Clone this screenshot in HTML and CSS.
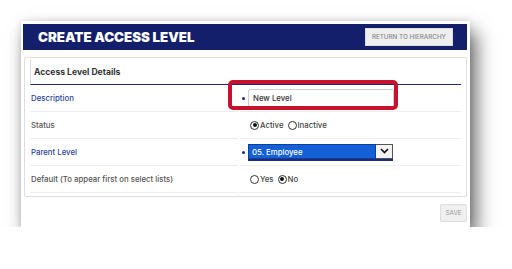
FILE: index.html
```html
<!DOCTYPE html>
<html lang="en">
<head>
    <meta charset="UTF-8">
    <meta name="viewport" content="width=device-width, initial-scale=1.0">
    <title>Create Access Level</title>
    <link rel="stylesheet" href="styles.css">
</head>
<body>
    <div class="window">
        <div class="page-header">
            <h1>CREATE ACCESS LEVEL</h1>
            <button class="btn-return">RETURN TO HIERARCHY</button>
        </div>

        <div class="panel">
            <div class="panel-title">Access Level Details</div>

            <div class="row">
                <div class="label label-req">Description</div>
                <div class="control">
                    <span class="req"></span>
                    <input type="text" class="text-input" value="New Level">
                    <div class="highlight"></div>
                </div>
            </div>

            <div class="row">
                <div class="label">Status</div>
                <div class="control radios">
                    <label><span class="radio checked"></span>Active</label>
                    <label><span class="radio"></span>Inactive</label>
                </div>
            </div>

            <div class="row">
                <div class="label label-req">Parent Level</div>
                <div class="control">
                    <span class="req"></span>
                    <div class="select">
                        <span class="select-value">05. Employee</span>
                        <span class="select-arrow">
                            <svg width="9" height="6" viewBox="0 0 9 6">
                                <path d="M1 1 L4.5 4.5 L8 1" fill="none" stroke="#111" stroke-width="1.6"/>
                            </svg>
                        </span>
                    </div>
                </div>
            </div>

            <div class="row">
                <div class="label">Default (To appear first on select lists)</div>
                <div class="control radios">
                    <label><span class="radio"></span>Yes</label>
                    <label><span class="radio checked"></span>No</label>
                </div>
            </div>
        </div>

        <div class="footer">
            <button class="btn-save">SAVE</button>
        </div>
    </div>
</body>
</html>
```

FILE: styles.css
```css
body {
    margin: 0;
    padding: 21px 0 0 21px;
    background-color: #ffffff;
    font-family: Inter, "Liberation Sans", Arial, sans-serif;
}

.window {
    width: 444px;
    height: 203px;
    padding: 3px 3px 0 2px;
    background-color: #ffffff;
    box-shadow: 6px 11px 18px rgba(0, 0, 0, 0.6), 0 0 6px rgba(0, 0, 0, 0.12);
    display: flex;
    flex-direction: column;
}

.page-header {
    height: 26px;
    background-color: #141f6c;
    display: flex;
    align-items: center;
    justify-content: space-between;
    padding: 0 14px 0 15px;
}

.page-header h1 {
    margin: 0;
    color: #ffffff;
    font-size: 13.3px;
    font-weight: 900;
    letter-spacing: 0;
}

.btn-return {
    height: 18px;
    padding: 0 6px;
    background-color: #efefef;
    border: 1px solid #dcdcdc;
    color: #8a8a8a;
    font-family: inherit;
    font-size: 6.3px;
    font-weight: 500;
}

.panel {
    margin-top: 7px;
    margin-left: 1px;
    border: 1px solid #dedede;
    border-radius: 2px;
    padding: 2px 5px 3px 5px;
}

.panel-title {
    height: 24px;
    line-height: 24px;
    padding-left: 3px;
    border-left: 1px solid #d5d9e6;
    border-bottom: 1.5px solid #1c2a78;
    font-size: 8.6px;
    font-weight: 700;
    color: #333333;
}

.row {
    display: flex;
    align-items: stretch;
    height: 27px;
    gap: 2px;
}

.label {
    width: 207px;
    display: flex;
    align-items: center;
    padding-left: 1px;
    border-bottom: 1px solid #eeeeee;
    font-size: 7.8px;
    font-weight: 500;
    color: #555555;
}

.label-req {
    color: #2c3f98;
}

.control {
    position: relative;
    display: flex;
    align-items: center;
    flex: 1;
    border-bottom: 1px solid #eeeeee;
}

.req {
    width: 8px;
    display: flex;
    align-items: center;
    padding-left: 2px;
    box-sizing: border-box;
}

.req::before {
    content: "";
    width: 3px;
    height: 3px;
    border-radius: 50%;
    background-color: #1c2a78;
}

.text-input {
    width: 146px;
    height: 18px;
    margin: 0;
    padding: 0 4px;
    box-sizing: border-box;
    border: 1px solid #cfcfcf;
    border-radius: 2px;
    font-family: inherit;
    font-size: 7.8px;
    font-weight: 500;
    color: #333333;
    outline: none;
}

.highlight {
    position: absolute;
    left: -12px;
    top: -5px;
    width: 162px;
    height: 22px;
    border: 4px solid #c4122f;
    border-radius: 5px;
}

.radios {
    padding-left: 10px;
    gap: 4px;
}

.radios label {
    display: flex;
    align-items: center;
    font-size: 7.8px;
    font-weight: 500;
    color: #444444;
}

.radio {
    width: 7px;
    height: 7px;
    border: 1px solid #333333;
    border-radius: 50%;
    margin-right: 1px;
    position: relative;
}

.radio.checked::after {
    content: "";
    position: absolute;
    left: 1.5px;
    top: 1.5px;
    width: 4px;
    height: 4px;
    border-radius: 50%;
    background-color: #111111;
}

.select {
    width: 145px;
    height: 15px;
    display: flex;
    border-bottom: 2px solid #1c2a78;
}

.select-value {
    flex: 1;
    background-color: #1460d6;
    color: #ffffff;
    font-size: 7.8px;
    font-weight: 500;
    line-height: 15px;
    padding-left: 3px;
    border: 1px solid #0e3fa0;
}

.select-arrow {
    width: 16px;
    display: flex;
    align-items: center;
    justify-content: center;
    background-color: #f4f4f4;
    border: 1px solid #555555;
    border-left: none;
}

.footer {
    display: flex;
    justify-content: flex-end;
    padding-top: 7px;
}

.btn-save {
    width: 27px;
    height: 18px;
    padding: 0;
    background-color: #f0f0f0;
    border: 1px solid #dddddd;
    border-radius: 2px;
    color: #9a9a9a;
    font-family: inherit;
    font-size: 6.3px;
}
```
